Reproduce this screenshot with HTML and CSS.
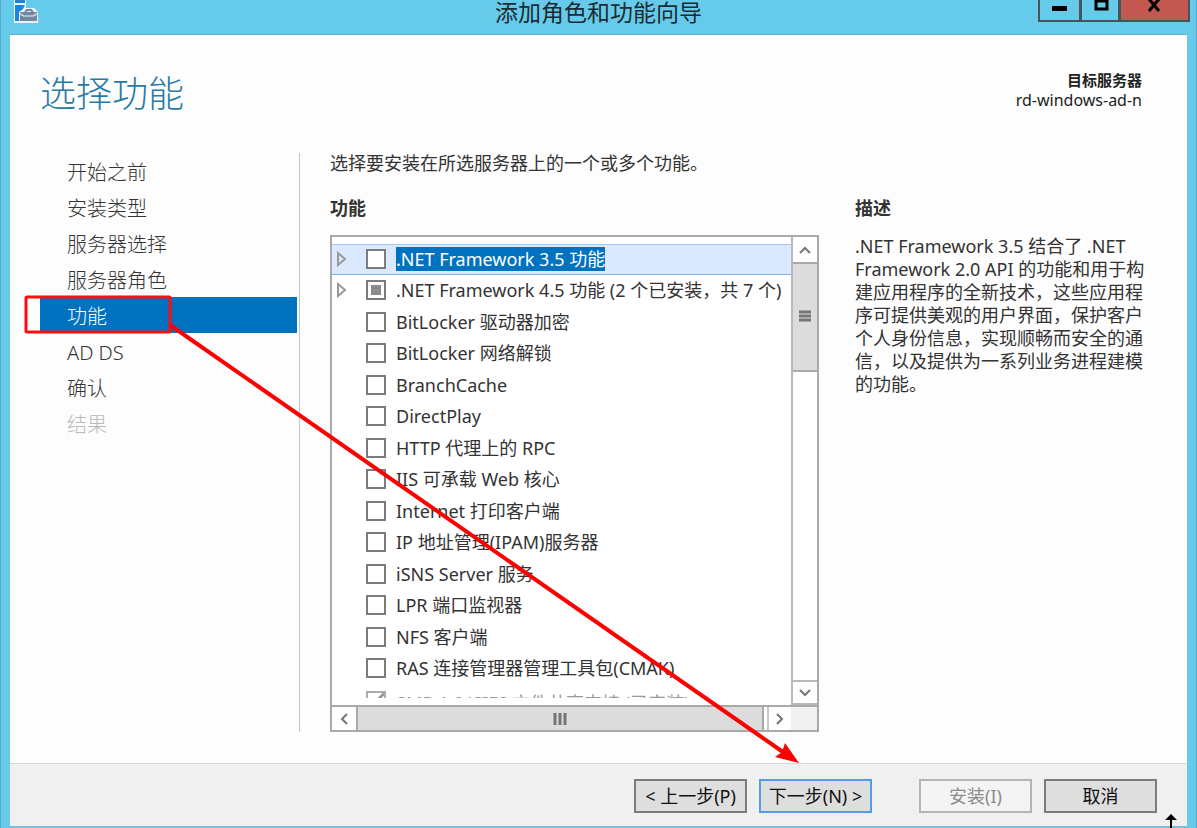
FILE: index.html
```html
<!DOCTYPE html>
<html lang="zh-CN">
<head>
<meta charset="utf-8">
<title>添加角色和功能向导</title>
<link rel="stylesheet" href="styles.css">
</head>
<body>
<div class="window">

  <div class="titlebar">
    <svg class="appicon" width="26" height="24" viewBox="0 0 26 24">
      <path d="M1 0h12v8h8l4 4v11H1z" fill="#e9f5fb"/>
      <path d="M2 0h10v3H2zM2 5h10l-2 4-4 3v9H2z" fill="#1d86d8"/>
      <path d="M12 12l2-2h4l2 2" fill="none" stroke="#74859f" stroke-width="2"/>
      <path d="M7 12h17v9H7z" fill="#74859f"/>
      <path d="M8 13v2h2v1h11v-1h2v-2" fill="none" stroke="#e9f5fb"/>
    </svg>
    <h1 class="caption">添加角色和功能向导</h1>
    <div class="winbuttons">
      <button class="winbtn min" aria-label="最小化"><svg width="40" height="20"><path d="M12 6h15v5H12z"/></svg></button>
      <button class="winbtn max" aria-label="最大化"><svg width="38" height="20"><path d="M14 1h11v8H14z" fill="none" stroke="#000" stroke-width="3"/></svg></button>
      <button class="winbtn close" aria-label="关闭"><svg width="68" height="20"><path d="M28 -1l10 12M38 -1l-10 12" stroke="#000" stroke-width="3"/></svg></button>
    </div>
  </div>

  <div class="content">
    <div class="header">
      <h2 class="pagetitle">选择功能</h2>
      <div class="target"><b>目标服务器</b><span>rd-windows-ad-n</span></div>
    </div>

    <div class="columns">
      <nav class="steps">
        <a href="#" class="step">开始之前</a>
        <a href="#" class="step">安装类型</a>
        <a href="#" class="step">服务器选择</a>
        <a href="#" class="step">服务器角色</a>
        <a href="#" class="step current">功能</a>
        <a href="#" class="step">AD DS</a>
        <a href="#" class="step">确认</a>
        <a class="step disabled">结果</a>
      </nav>

      <div class="features">
        <p class="intro">选择要安装在所选服务器上的一个或多个功能。</p>
        <h3 class="heading">功能</h3>
        <div class="listbox">
          <div class="viewport">
            <ul class="tree">
              <li class="row selected"><svg class="expand" width="12" height="16"><path d="M2 2l7 6-7 6z"/></svg><input type="checkbox" id="f1"><label for="f1">.NET Framework 3.5 功能</label></li>
              <li class="row"><svg class="expand" width="12" height="16"><path d="M2 2l7 6-7 6z"/></svg><input type="checkbox" id="f2" class="partial"><label for="f2">.NET Framework 4.5 功能 (2 个已安装，共 7 个)</label></li>
              <li class="row"><input type="checkbox" id="f3"><label for="f3">BitLocker 驱动器加密</label></li>
              <li class="row"><input type="checkbox" id="f4"><label for="f4">BitLocker 网络解锁</label></li>
              <li class="row"><input type="checkbox" id="f5"><label for="f5">BranchCache</label></li>
              <li class="row"><input type="checkbox" id="f6"><label for="f6">DirectPlay</label></li>
              <li class="row"><input type="checkbox" id="f7"><label for="f7">HTTP 代理上的 RPC</label></li>
              <li class="row"><input type="checkbox" id="f8"><label for="f8">IIS 可承载 Web 核心</label></li>
              <li class="row"><input type="checkbox" id="f9"><label for="f9">Internet 打印客户端</label></li>
              <li class="row"><input type="checkbox" id="f10"><label for="f10">IP 地址管理(IPAM)服务器</label></li>
              <li class="row"><input type="checkbox" id="f11"><label for="f11">iSNS Server 服务</label></li>
              <li class="row"><input type="checkbox" id="f12"><label for="f12">LPR 端口监视器</label></li>
              <li class="row"><input type="checkbox" id="f13"><label for="f13">NFS 客户端</label></li>
              <li class="row"><input type="checkbox" id="f14"><label for="f14">RAS 连接管理器管理工具包(CMAK)</label></li>
              <li class="row installed"><input type="checkbox" id="f15" checked disabled><label for="f15">SMB 1.0/CIFS 文件共享支持 (已安装)</label></li>
            </ul>
          </div>
          <div class="vscroll">
            <button class="arrow" aria-label="向上滚动"><svg width="12" height="8"><path d="M1 7l5-5 5 5"/></svg></button>
            <div class="vthumb"><svg width="12" height="14"><path d="M0 2h12M0 6h12M0 10h12"/></svg></div>
            <button class="arrow down" aria-label="向下滚动"><svg width="12" height="8"><path d="M1 1l5 5 5-5"/></svg></button>
          </div>
          <div class="hscroll">
            <button class="arrow" aria-label="向左滚动"><svg width="8" height="12"><path d="M7 1L2 6l5 5"/></svg></button>
            <div class="hthumb"><svg width="14" height="12"><path d="M2 0v12M7 0v12M12 0v12"/></svg></div>
            <button class="arrow right" aria-label="向右滚动"><svg width="8" height="12"><path d="M1 1l5 5-5 5"/></svg></button>
          </div>
        </div>
      </div>

      <div class="description">
        <h3 class="heading">描述</h3>
        <p>.NET Framework 3.5 结合了 .NET Framework 2.0 API 的功能和用于构建应用程序的全新技术，这些应用程序可提供美观的用户界面，保护客户个人身份信息，实现顺畅而安全的通信，以及提供为一系列业务进程建模的功能。</p>
      </div>
    </div>
  </div>

  <div class="footer">
    <button class="btn">&lt; 上一步(P)</button>
    <button class="btn default">下一步(N) &gt;</button>
    <button class="btn install" disabled>安装(I)</button>
    <button class="btn">取消</button>
  </div>
</div>

<!-- red markup drawn over the window -->
<svg class="markup" width="1197" height="828">
  <rect x="26" y="297" width="144" height="35" rx="1" fill="none" stroke="#fd0d12" stroke-width="3"/>
  <path d="M170 325L783 752" stroke="#fe0000" stroke-width="4"/>
  <path d="M799 763L775 757L782 752L785 743z" fill="#fe0000"/>
  <path d="M1171 814l6 6h-5v8h-2v-8h-5z" fill="#000"/>
</svg>
</body>
</html>
```
FILE: styles.css
```css
* {
  box-sizing: border-box;
}

body {
  margin: 0;
  font-family: "Noto Sans", "Noto Sans CJK SC", sans-serif;
  font-size: 18px;
  color: #333;
}

h1, h2, h3, p, ul {
  margin: 0;
  padding: 0;
}

button {
  font-family: inherit;
  padding: 0;
}

.window {
  display: flex;
  flex-direction: column;
  min-height: 100vh;
  background: #66cbea;
  border-left: 1px solid #58a9cc;
  border-right: 1px solid #58a9cc;
  padding: 0 9px 1px;
}

/* title bar */
.titlebar {
  display: grid;
  grid-template-columns: 160px 1fr 160px;
  height: 35px;
  border-bottom: 1px solid #6aaed0;
}

.appicon {
  margin-left: 3px;
}

.caption {
  font-size: 23px;
  font-weight: 400;
  line-height: 24px;
  text-align: center;
  color: #1c2b33;
}

.winbuttons {
  display: flex;
  justify-content: flex-end;
  margin-right: -3px;
}

.winbtn {
  height: 22px;
  border: 2px solid #45555e;
  border-top: 0;
  border-left-width: 1px;
  background: #66cbea;
  overflow: hidden;
}

.winbtn svg {
  display: block;
}

.min {
  width: 43px;
  border-left-width: 2px;
}

.max {
  width: 39px;
}

.close {
  width: 70px;
  background: #c2584f;
}

/* page */
.content {
  flex: 1;
  display: flex;
  flex-direction: column;
  background: #fdfdfd;
  padding: 0 37px 31px 30px;
}

.header {
  display: flex;
  justify-content: space-between;
  height: 118px;
  padding: 35px 8px 0 0;
}

.pagetitle {
  font-size: 36px;
  font-weight: 300;
  line-height: 48px;
  color: #2a7aa6;
}

.target {
  display: flex;
  flex-direction: column;
  font-size: 16px;
  line-height: 20px;
  text-align: right;
  color: #222;
}

.target b {
  font-size: 15px;
}

.columns {
  flex: 1;
  display: flex;
}

.steps {
  width: 260px;
  margin-right: 30px;
  padding-right: 2px;
  border-right: 1px solid #c6c6c6;
}

.step {
  display: block;
  height: 36px;
  padding-left: 27px;
  font-size: 20px;
  font-weight: 300;
  line-height: 40px;
  color: #333;
  text-decoration: none;
}

.current {
  background: #0072bf;
  color: #fff;
}

.disabled {
  color: #b8b8b8;
}

.features {
  flex: 1;
  display: flex;
  flex-direction: column;
  min-width: 0;
}

.intro {
  line-height: 20px;
  margin-bottom: 25px;
}

.heading {
  font-size: 18px;
  line-height: 20px;
  margin-bottom: 17px;
}

.description {
  width: 295px;
  margin-left: 36px;
  padding-top: 45px;
}

.description p {
  line-height: 23px;
}

/* feature list */
.listbox {
  flex: 1;
  display: grid;
  grid-template-columns: 1fr 26px;
  grid-template-rows: 1fr 25px;
  border: 2px solid #a9a9a9;
  background: #fff;
}

.viewport {
  height: 461px;
  padding-top: 7px;
  overflow: hidden;
}

.tree {
  list-style: none;
}

.row {
  display: flex;
  align-items: center;
  height: 31px;
  padding-left: 34px;
  padding-bottom: 2px;
  white-space: nowrap;
}

.row:nth-child(even) {
  height: 32px;
}

.row label {
  line-height: 24px;
}

.expand {
  width: 12px;
  margin: 0 18px 0 -30px;
  fill: none;
  stroke: #999;
  stroke-width: 2;
}

.row input {
  appearance: none;
  flex: none;
  width: 20px;
  height: 20px;
  margin: 0 10px 0 0;
  border: 2px solid #7c7c7c;
  background: #fff;
}

.row .partial {
  background: #8a8a8a;
  background-clip: content-box;
  padding: 3px;
}

.selected {
  background: #dae9fd;
  border-top: 1px solid #a5c8ee;
  border-bottom: 1px solid #7fb2e2;
}

.selected label {
  background: #0072bf;
  color: #fff;
}

.tree .installed {
  height: 14px;
  margin-top: 6px;
  padding-bottom: 0;
  align-items: flex-start;
  overflow: hidden;
  color: #999;
}

.installed input {
  border-color: #aaa;
  background: linear-gradient(135deg, transparent 45%, #999 45%, #999 58%, transparent 58%);
}

.listbox svg {
  display: block;
}

.arrow svg, .vthumb svg, .hthumb svg {
  fill: none;
  stroke: #757575;
  stroke-width: 2;
}

.vthumb svg, .hthumb svg {
  stroke-width: 3;
}

.arrow {
  display: flex;
  align-items: center;
  justify-content: center;
  width: 24px;
  height: 25px;
  border: 0;
  background: #fff;
}

.vscroll {
  display: flex;
  flex-direction: column;
  border-left: 2px solid #b9b9b9;
}

.vthumb {
  display: flex;
  align-items: center;
  justify-content: center;
  height: 110px;
  border: 2px solid #a9a9a9;
  border-left: 0;
  border-right: 0;
  background: #dcdcdc;
}

.down {
  margin-top: auto;
  border-top: 2px solid #b9b9b9;
  border-bottom: 2px solid #b9b9b9;
}

.hscroll {
  grid-column: 1 / 3;
  display: flex;
  padding-right: 26px;
  background: linear-gradient(#f0f0f0, #f0f0f0) right / 26px 100% no-repeat;
  border-top: 2px solid #a9a9a9;
}

.hscroll .arrow {
  height: 23px;
}

.hthumb {
  flex: 1;
  display: flex;
  align-items: center;
  justify-content: center;
  margin-right: 3px;
  border: 2px solid #a9a9a9;
  border-width: 0 2px;
  background: #dcdcdc;
}

.right {
  border-left: 2px solid #c9c9c9;
}

/* bottom buttons */
.footer {
  display: flex;
  justify-content: flex-end;
  gap: 12px;
  height: 64px;
  padding: 15px 30px 0;
  background: #f0f0f0;
  border-top: 1px solid #d6d6d6;
  border-bottom: 1px solid #84b4cc;
}

.btn {
  width: 113px;
  height: 34px;
  border: 2px solid #7c7c7c;
  background: #dedede;
  font-size: 18px;
  line-height: 28px;
  color: #111;
}

.default {
  border-color: #569de5;
}

.install {
  margin-left: 35px;
  border-color: #b4b4b4;
  background: #f4f4f4;
  color: #8c8c8c;
}

.markup {
  position: absolute;
  top: 0;
  left: 0;
  pointer-events: none;
}
```
